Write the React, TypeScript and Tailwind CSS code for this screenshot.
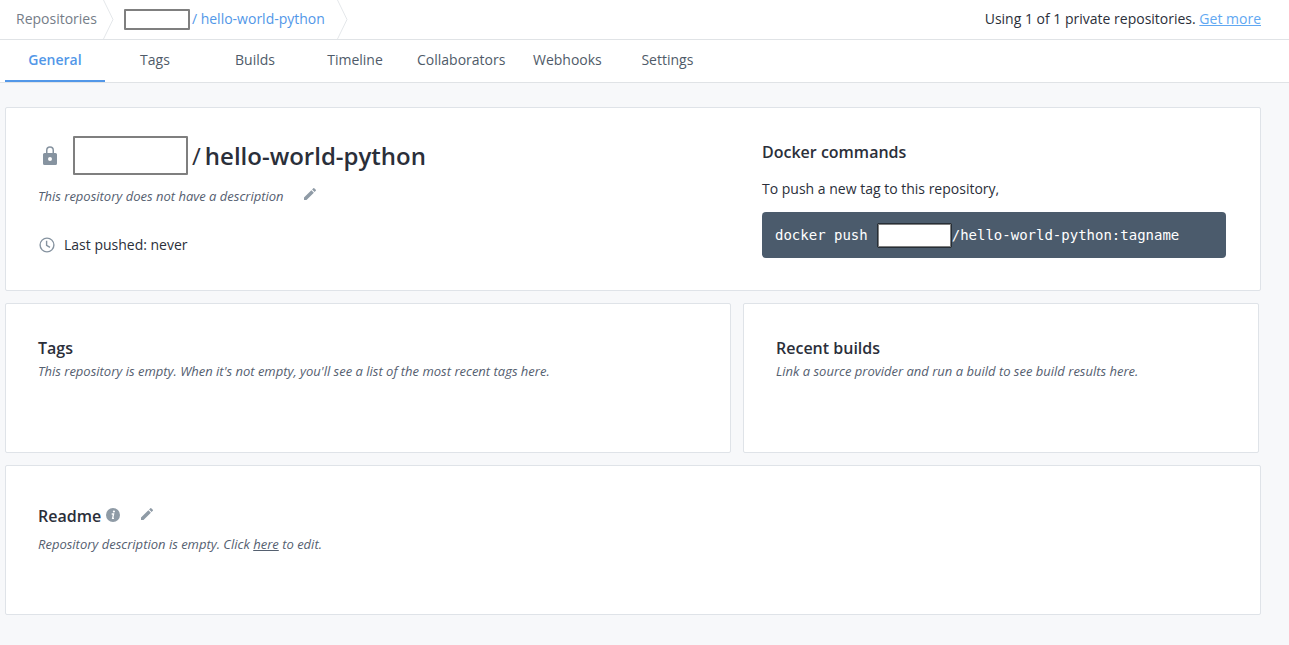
import React from "react";

const tabs = ["General", "Tags", "Builds", "Timeline", "Collaborators", "Webhooks", "Settings"];

function Chevron() {
  return (
    <svg className="h-[39px] w-[11px] shrink-0" viewBox="0 0 11 39" fill="none" stroke="#e4e7ea" aria-hidden="true">
      <path d="M0.5 0L10 19.5L0.5 39" />
    </svg>
  );
}

function Pencil() {
  return (
    <svg className="size-4" viewBox="0 0 24 24" fill="#8f9ba6" aria-hidden="true">
      <path d="M3 17.25V21h3.75L17.81 9.94l-3.75-3.75L3 17.25zM20.71 7.04a1 1 0 0 0 0-1.41l-2.34-2.34a1 1 0 0 0-1.41 0l-1.83 1.83 3.75 3.75 1.83-1.83z" />
    </svg>
  );
}

function Lock() {
  return (
    <svg className="size-6 shrink-0" viewBox="0 0 24 24" fill="#8693a0" aria-hidden="true">
      <path
        fillRule="evenodd"
        d="M17.5 9H16V6.2a4 4 0 0 0-8 0V9H6.5A1.5 1.5 0 0 0 5 10.5v9A1.5 1.5 0 0 0 6.5 21h11a1.5 1.5 0 0 0 1.5-1.5v-9A1.5 1.5 0 0 0 17.5 9zM9.5 6.2a2.5 2.5 0 0 1 5 0V9h-5zM12 12.9a2 2 0 1 1 0 4 2 2 0 0 1 0-4z"
      />
    </svg>
  );
}

function Clock() {
  return (
    <svg className="size-[18px] shrink-0" viewBox="0 0 18 18" fill="none" stroke="#8693a0" strokeWidth="1.4" aria-hidden="true">
      <circle cx="9" cy="9" r="6.9" />
      <path d="M8.6 4.8V9.3L12 11.4" />
    </svg>
  );
}

function Info() {
  return (
    <svg className="size-[14px]" viewBox="0 0 14 14" aria-hidden="true">
      <circle cx="7" cy="7" r="7" fill="#8f9ba6" />
      <circle cx="7.9" cy="3.5" r="1.1" fill="#fff" />
      <path d="M5.7 6H7.6L6.6 10.3H8" fill="none" stroke="#fff" strokeWidth="1.3" />
    </svg>
  );
}

const card = "rounded-xs border border-[#dfe3e8] bg-white px-8";
const heading = "text-base leading-6 font-semibold text-[#2b2f3a]";
const note = "text-[13px] leading-[22px] text-[#556070] italic";

export default function App() {
  return (
    <div className="min-h-screen bg-[#f7f8fa] font-['Open_Sans',sans-serif] text-sm text-[#2b2f3a]">
      <header className="flex h-10 items-center justify-between border-b border-[#e0e3e6] bg-white pr-7">
        <nav aria-label="Breadcrumb" className="flex items-center">
          <a href="#repositories" className="pr-[6px] pb-[2px] pl-4 text-[#757d88]">Repositories</a>
          <Chevron />
          <a href="#repository" className="flex items-center gap-[2px] pr-3 pb-[2px] pl-[10px] text-[#5297e8]">
            <span className="mt-[2px] h-[21px] w-[66px] rounded-[1px] border-2 border-[#7f7f7f] bg-white" />
            / hello-world-python
          </a>
          <Chevron />
        </nav>
        <p className="pb-[2px]">
          Using 1 of 1 private repositories.{" "}
          <a href="#upgrade" className="text-[#61a8f2] underline">Get more</a>
        </p>
      </header>

      <nav aria-label="Repository" className="flex h-[43px] border-b border-[#e0e3e6] bg-white pl-[5px]">
        {tabs.map((tab, i) => (
          <a
            key={tab}
            href={"#" + tab.toLowerCase()}
            aria-current={i === 0 ? "page" : undefined}
            className={
              i === 0
                ? "min-w-[100px] border-b-2 border-[#5297e8] px-3 pt-[10px] text-center font-semibold text-[#5297e8]"
                : "min-w-[100px] px-3 pt-[10px] text-center text-[#4f5b69]"
            }
          >
            {tab}
          </a>
        ))}
      </nav>

      <main className="flex flex-col gap-3 pt-6 pr-7 pb-[30px] pl-[5px]">
        <section className={card + " grid min-h-[184px] grid-cols-[1fr_464px] pt-7 pr-[34px] pb-7"}>
          <div>
            <div className="flex items-center">
              <Lock />
              <h1 className="ml-[11px] flex items-center gap-1 text-2xl leading-10 font-semibold">
                <span className="mb-px h-[39px] w-[115px] rounded-[1px] border-2 border-[#7f7f7f] bg-white" />
                <span className="font-normal">/</span>
                <span>hello-world-python</span>
              </h1>
            </div>
            <div className="mt-[9px] flex items-center gap-[18px]">
              <p className={note}>This repository does not have a description</p>
              <button type="button" aria-label="Edit description" className="pb-1">
                <Pencil />
              </button>
            </div>
            <p className="mt-7 flex items-center gap-2">
              <Clock />
              Last pushed: never
            </p>
          </div>
          <div className="pt-1">
            <h2 className={heading}>Docker commands</h2>
            <p className="mt-[14px] leading-[22px]">To push a new tag to this repository,</p>
            <code className="mt-3 flex h-[46px] items-center rounded-sm bg-[#4b5b6c] px-[13px] font-['DejaVu_Sans_Mono',monospace] text-white">
              docker push
              <span className="ml-[9px] h-[25px] w-[75px] rounded-[1px] border border-[#262e36] bg-white inset-ring-1 inset-ring-[#7f7f7f]" />
              /hello-world-python:tagname
            </code>
          </div>
        </section>

        <div className="grid grid-cols-[726fr_516fr] gap-3 pr-[2px]">
          <section className={card + " min-h-[150px] pt-8"}>
            <h2 className={heading}>Tags</h2>
            <p className={note}>This repository is empty. When it's not empty, you'll see a list of the most recent tags here.</p>
          </section>
          <section className={card + " min-h-[150px] pt-8"}>
            <h2 className={heading}>Recent builds</h2>
            <p className={note}>Link a source provider and run a build to see build results here.</p>
          </section>
        </div>

        <section className={card + " min-h-[150px] pt-[38px]"}>
          <div className="flex items-center">
            <h2 className={heading}>Readme</h2>
            <span className="ml-[5px] pb-[2px]">
              <Info />
            </span>
            <button type="button" aria-label="Edit readme" className="ml-[19px] pb-1">
              <Pencil />
            </button>
          </div>
          <p className={note + " mt-[5px]"}>
            Repository description is empty. Click <a href="#edit" className="underline">here</a> to edit.
          </p>
        </section>
      </main>
    </div>
  );
}
